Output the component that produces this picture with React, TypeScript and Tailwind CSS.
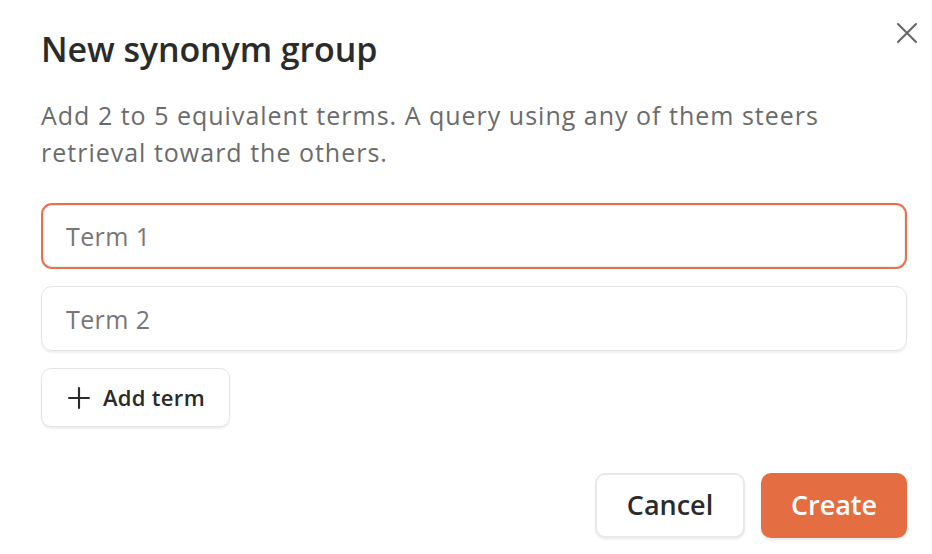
import { Plus, X } from "lucide-react";

const font = { fontFamily: '"Open Sans", "Noto Sans", sans-serif' };

export default function App() {
  return (
    <div
      className="relative w-[932px] h-[554px] bg-white pl-[41px] pr-[25px] pt-[26px] text-[#2b2b2b]"
      style={font}
    >
      <button className="absolute top-[15px] left-[889px] text-[#666]">
        <X className="h-[36px] w-[36px]" strokeWidth={1.4} />
      </button>

      <h2 className="text-[34px] leading-[46px] font-semibold tracking-[-0.1px]">New synonym group</h2>

      <p className="mt-[25px] text-[25px] leading-[37px] tracking-[1px] text-[#6b6b6b]">
        Add 2 to 5 equivalent terms. A query using any of them steers retrieval toward the others.
      </p>

      <div className="mt-[32px] flex flex-col gap-[17px]">
        <input
          placeholder="Term 1"
          className="h-[66px] w-full rounded-[11px] border-2 border-[#e8704a] px-[23px] text-[25px] tracking-[0.4px] text-[#2b2b2b] placeholder:text-[#777] outline-none shadow-[inset_0_0_0_1px_#eeeeee]"
        />
        <input
          placeholder="Term 2"
          className="h-[65px] w-full rounded-[11px] border border-[#e4e4e4] px-[24px] text-[25px] tracking-[0.4px] text-[#2b2b2b] placeholder:text-[#777] outline-none shadow-[0_2px_2px_rgba(0,0,0,0.06)]"
        />
      </div>

      <button className="mt-[17px] flex h-[59px] w-[189px] items-center gap-[7px] rounded-[10px] border border-[#e4e4e4] pl-[20px] text-[22px] tracking-[0.3px] font-semibold shadow-[0_2px_2px_rgba(0,0,0,0.07)]">
        <Plus className="h-[34px] w-[34px]" strokeWidth={1.5} />
        Add term
      </button>

      <div className="mt-[46px] flex justify-end gap-[16px]">
        <button className="h-[65px] w-[150px] rounded-[10px] border-2 border-[#e8e8e8] bg-white text-[27px] font-semibold text-[#2b2b2b] shadow-[0_2px_2px_rgba(0,0,0,0.06)]">
          Cancel
        </button>
        <button className="h-[65px] w-[146px] rounded-[10px] bg-[#e56d42] text-[27px] font-semibold text-white shadow-[0_2px_3px_rgba(0,0,0,0.1)]">
          Create
        </button>
      </div>
    </div>
  );
}
